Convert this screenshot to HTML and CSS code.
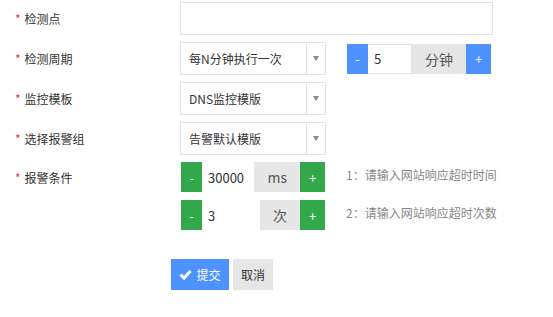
FILE: index.html
```html
<!DOCTYPE html>
<html>
<head>
    <title>添加监测</title>
    <link rel="stylesheet" href="styles.css">
</head>
<body>
    <form class="form">
        <div class="row">
            <label class="label"><span class="req">*</span>检测点</label>
            <input class="text-input" type="text">
        </div>
        <div class="row">
            <label class="label"><span class="req">*</span>检测周期</label>
            <div class="select">
                <span class="select-text">每N分钟执行一次</span>
                <span class="select-arrow"></span>
            </div>
            <div class="spinner spinner-blue">
                <span class="spin-btn">-</span>
                <input class="spin-input" type="text" value="5">
                <span class="spin-unit">分钟</span>
                <span class="spin-btn spin-plus">+</span>
            </div>
        </div>
        <div class="row">
            <label class="label"><span class="req">*</span>监控模板</label>
            <div class="select">
                <span class="select-text">DNS监控模版</span>
                <span class="select-arrow"></span>
            </div>
        </div>
        <div class="row">
            <label class="label"><span class="req">*</span>选择报警组</label>
            <div class="select">
                <span class="select-text">告警默认模版</span>
                <span class="select-arrow"></span>
            </div>
        </div>
        <div class="row row-short">
            <label class="label"><span class="req">*</span>报警条件</label>
            <div class="spinner spinner-green">
                <span class="spin-btn">-</span>
                <input class="spin-input" type="text" value="30000">
                <span class="spin-unit">ms</span>
                <span class="spin-btn spin-plus">+</span>
            </div>
            <span class="hint">1：请输入网站响应超时时间</span>
        </div>
        <div class="row row-short">
            <label class="label"></label>
            <div class="spinner spinner-green">
                <span class="spin-btn">-</span>
                <input class="spin-input" type="text" value="3">
                <span class="spin-unit">次</span>
                <span class="spin-btn spin-plus">+</span>
            </div>
            <span class="hint">2：请输入网站响应超时次数</span>
        </div>
        <div class="actions">
            <button type="submit" class="btn btn-primary">
                <svg width="13" height="11" viewBox="0 0 13 11"><polyline points="1.5,5.5 5,9 11.5,2" fill="none" stroke="#fff" stroke-width="3"/></svg>
                提交
            </button>
            <button type="button" class="btn btn-default">取消</button>
        </div>
    </form>
</body>
</html>
```

FILE: styles.css
```css
body {
    margin: 0;
    font-family: "Noto Sans CJK SC", sans-serif;
    font-size: 12px;
    color: #333;
    background: #fff;
}

.form {
    padding-top: 2px;
}

.row {
    display: flex;
    align-items: center;
    height: 33px;
    margin-bottom: 7px;
}

.row-short {
    height: 30px;
    margin-bottom: 8px;
}

.label {
    width: 165px;
    padding-left: 15px;
    flex-shrink: 0;
}

.req {
    color: #e4393c;
    margin-right: 4px;
}

.text-input {
    width: 313px;
    height: 33px;
    box-sizing: border-box;
    border: 1px solid #e3e3e3;
    margin: 0;
    outline: none;
}

.select {
    display: flex;
    width: 146px;
    height: 33px;
    box-sizing: border-box;
    border: 1px solid #e3e3e3;
}

.select-text {
    flex: 1;
    padding-left: 8px;
    line-height: 31px;
    color: #333;
}

.select-arrow {
    width: 18px;
    border-left: 1px solid #e3e3e3;
    display: flex;
    align-items: center;
    justify-content: center;
}

.select-arrow::after {
    content: "";
    border-left: 3px solid transparent;
    border-right: 3px solid transparent;
    border-top: 5px solid #888;
}

.spinner {
    display: flex;
    width: 144px;
    height: 30px;
}

.spinner-blue {
    margin-left: 21px;
}

.spinner-green {
    margin-left: 1px;
}

.spin-btn {
    width: 21px;
    color: #fff;
    display: flex;
    align-items: center;
    justify-content: center;
    font-size: 13px;
}

.spin-plus {
    width: 25px;
}

.spinner-blue .spin-btn {
    background: #4e92ff;
}

.spinner-green .spin-btn {
    background: #33a84b;
}

.spin-input {
    flex: 1;
    min-width: 0;
    margin: 0;
    padding: 0 0 0 6px;
    border: none;
    outline: none;
    font-family: "Noto Sans CJK SC", sans-serif;
    font-size: 13px;
    color: #333;
    background: #fff;
}

.spinner-blue .spin-input {
    border: 1px solid #e3e3e3;
    border-left: none;
}

.spin-unit {
    background: #e6e6e6;
    color: #555;
    font-size: 14px;
    padding: 0 13px;
    display: flex;
    align-items: center;
}

.hint {
    margin-left: 21px;
    color: #888;
    margin-top: -5px;
}

.actions {
    display: flex;
    gap: 4px;
    margin-top: 29px;
    padding-left: 171px;
}

.btn {
    height: 31px;
    border: none;
    margin: 0;
    font-family: "Noto Sans CJK SC", sans-serif;
    font-size: 12px;
    display: flex;
    align-items: center;
    justify-content: center;
    cursor: pointer;
}

.btn-primary {
    width: 58px;
    background: #4e92ff;
    color: #fff;
    gap: 4px;
}

.btn-default {
    width: 40px;
    background: #e6e6e6;
    color: #333;
}
```
